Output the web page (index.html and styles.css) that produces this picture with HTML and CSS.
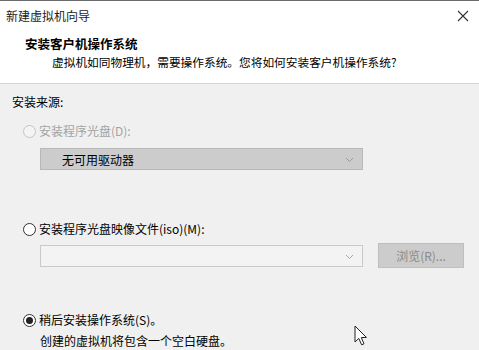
FILE: index.html
```html
<!DOCTYPE html>
<html lang="zh-CN">
<head>
<meta charset="utf-8">
<link rel="stylesheet" href="styles.css">
</head>
<body>
<div class="window">
  <div class="top">
    <div class="titlebar">
      <span class="title">新建虚拟机向导</span>
      <span class="close">
        <svg width="12" height="12" viewBox="0 0 12 12"><path d="M1 1 L11 11 M11 1 L1 11" stroke="#333" stroke-width="1.1" fill="none"/></svg>
      </span>
    </div>
    <div class="header">
      <div class="h-title">安装客户机操作系统</div>
      <div class="h-sub">虚拟机如同物理机，需要操作系统。您将如何安装客户机操作系统?</div>
    </div>
  </div>
  <div class="content">
    <div class="label">安装来源:</div>

    <div class="radio-row disabled r1">
      <span class="radio"></span>
      <span>安装程序光盘(D):</span>
    </div>
    <div class="select disabled-select">
      <span>无可用驱动器</span>
      <svg class="chev" width="9" height="6" viewBox="0 0 9 6"><path d="M1 1 L4.5 4.5 L8 1" stroke="#9a9a9a" stroke-width="1" fill="none"/></svg>
    </div>

    <div class="radio-row r2">
      <span class="radio"></span>
      <span>安装程序光盘映像文件(iso)(M):</span>
    </div>
    <div class="iso-row">
      <div class="select iso-input">
        <span></span>
        <svg class="chev" width="9" height="6" viewBox="0 0 9 6"><path d="M1 1 L4.5 4.5 L8 1" stroke="#a8a8a8" stroke-width="1" fill="none"/></svg>
      </div>
      <div class="btn">浏览(R)...</div>
    </div>

    <div class="radio-row r3">
      <span class="radio checked"></span>
      <span>稍后安装操作系统(S)。</span>
    </div>
    <div class="note">创建的虚拟机将包含一个空白硬盘。</div>
  </div>
  <svg class="cursor" width="14" height="22" viewBox="0 0 14 22">
    <path d="M1 1 L1 17 L4.8 13.4 L7.6 19.8 L10 18.8 L7.3 12.6 L12.4 12.4 Z" fill="#fff" stroke="#222" stroke-width="1"/>
  </svg>
</div>
</body>
</html>
```

FILE: styles.css
```css
html, body {
  margin: 0;
  padding: 0;
}
body {
  width: 479px;
  height: 350px;
  overflow: hidden;
  font-family: "Microsoft YaHei", "Noto Sans CJK SC", "Noto Sans", sans-serif;
  font-size: 12px;
  color: #000;
  background: #f0f0f0;
}
.window {
  position: relative;
  height: 350px;
}
.top {
  background: #fff;
  border-top: 1px solid #6a6a6a;
  border-bottom: 1px solid #d6d6d6;
  height: 82px;
}
.titlebar {
  height: 29px;
  display: flex;
  align-items: center;
  justify-content: space-between;
  padding: 0 10px 0 6px;
}
.title {
  color: #1a1a1a;
  font-size: 12px;
  line-height: 16px;
}
.close {
  display: flex;
  align-items: center;
}
.header {
  padding: 5px 0 0 25px;
}
.h-title {
  font-weight: bold;
  font-size: 12.5px;
  line-height: 18px;
}
.h-sub {
  padding-left: 27px;
  line-height: 17px;
  font-size: 11.7px;
}
.content {
  padding: 9px 0 0 12px;
}
.label {
  line-height: 18px;
}
.radio-row {
  display: flex;
  align-items: center;
  gap: 3px;
  margin-left: 11px;
  line-height: 18px;
}
.r1 { margin-top: 11px; }
.r2 { margin-top: 50px; }
.r3 { margin-top: 43px; }
.radio {
  width: 11px;
  height: 11px;
  border: 1px solid #333;
  border-radius: 50%;
  background: #fff;
  display: flex;
  align-items: center;
  justify-content: center;
  box-sizing: content-box;
}
.radio.checked::after {
  content: "";
  width: 7px;
  height: 7px;
  border-radius: 50%;
  background: #222;
}
.disabled {
  color: #a3a3a3;
}
.disabled .radio {
  border-color: #c4c4c4;
  background: #f4f4f4;
}
.select {
  margin-left: 28px;
  width: 323px;
  height: 20px;
  border: 1px solid #b8b8b8;
  display: flex;
  align-items: center;
  justify-content: space-between;
  padding: 0 8px 0 21px;
  box-sizing: border-box;
}
.disabled-select {
  background: #cccccc;
  height: 22px;
  margin-top: 8px;
}
.chev {
  margin-top: 1px;
}
.iso-row {
  display: flex;
  align-items: flex-start;
  margin-top: 5px;
}
.iso-input {
  background: #f3f3f3;
  border-color: #c9c9c9;
  height: 22px;
  margin-top: 2px;
}
.btn {
  margin-left: 15px;
  width: 86px;
  height: 25px;
  box-sizing: border-box;
  background: #cccccc;
  border: 1px solid #bfbfbf;
  color: #8a8a8a;
  display: flex;
  align-items: center;
  justify-content: center;
}
.note {
  margin-left: 28px;
  margin-top: 3px;
  line-height: 18px;
}
.cursor {
  position: absolute;
  left: 354px;
  top: 325px;
}
```
